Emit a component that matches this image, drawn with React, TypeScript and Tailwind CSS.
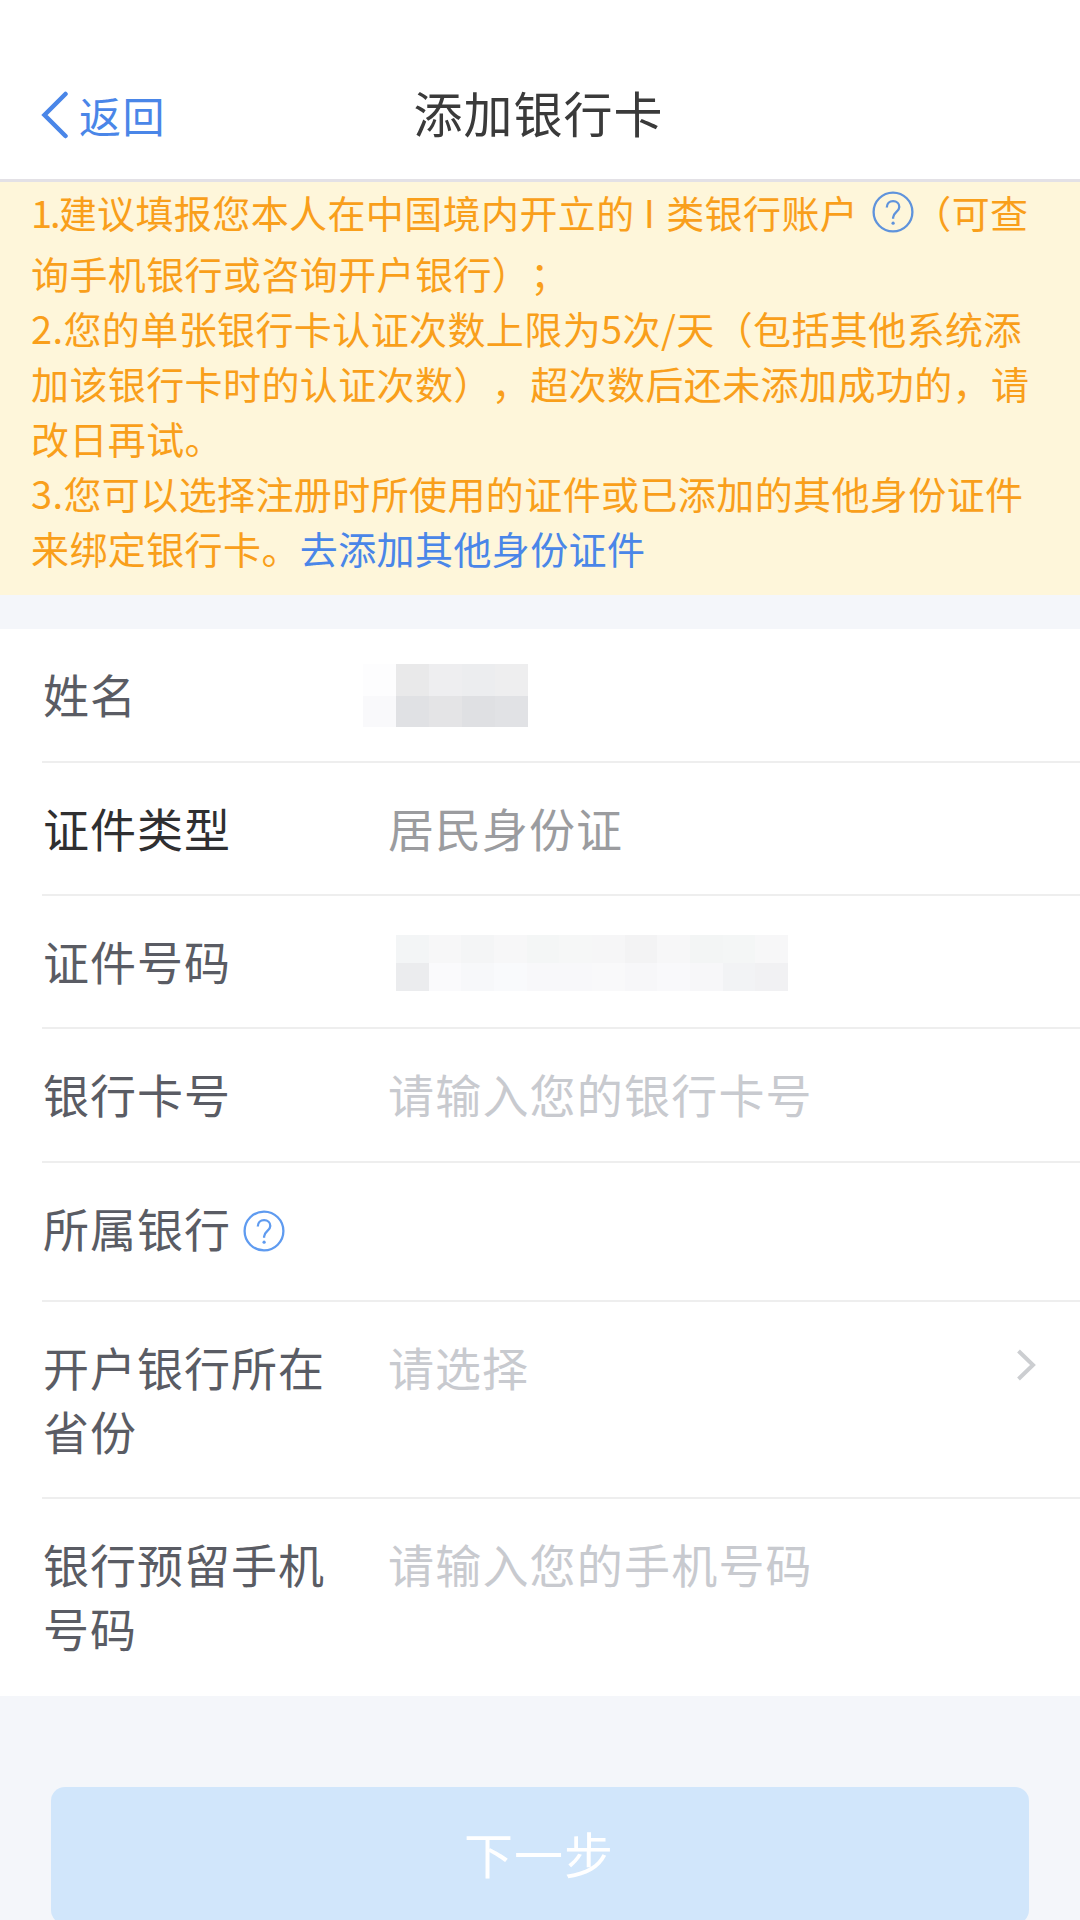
import React from 'react';

interface FormRowProps {
  label: React.ReactNode;
  className: string;
  labelColor?: string;
  children?: React.ReactNode;
}

const HelpIcon: React.FC<{ className: string }> = ({ className }) => (
  <svg width="42" height="42" viewBox="0 0 42 42" fill="none" stroke="currentColor" className={className}>
    <circle cx="21" cy="21" r="19.4" strokeWidth="2.3" />
    <path d="M14.8 16.4c0-3.8 2.7-6.3 6.3-6.3s6.2 2.4 6.2 5.8c0 5-6.2 5.6-6.2 10.6v1.3" strokeWidth="2.3" />
    <circle cx="21.1" cy="32.2" r="1.6" fill="currentColor" stroke="none" />
  </svg>
);

// Pixelated cover for private values
const Mosaic: React.FC<{ rows: string[][]; className: string }> = ({ rows, className }) => (
  <div className={`flex flex-col ${className}`}>
    {rows.map((row, i) => (
      <div key={i} className="flex flex-1">
        {row.map((color, j) => (
          <span key={j} className="flex-1" style={{ backgroundColor: color }} />
        ))}
      </div>
    ))}
  </div>
);

const nameMosaic = [
  ['#fdfdfe', '#e9e9ea', '#eeeef0', '#ecedef', '#eeeeef'],
  ['#f9f9fb', '#e0e1e4', '#e4e4e6', '#dfe0e3', '#e1e2e5'],
];

const idMosaic = [
  ['#f3f5f6', '#f7f7f8', '#f4f5f6', '#f7f7f8', '#f4f6f6', '#f6f7f7', '#f6f6f7', '#f3f3f4', '#f7f7f8', '#f3f5f5', '#f4f6f6', '#f7f7f8'],
  ['#ebecee', '#fafafc', '#f7f8fa', '#f9fafc', '#f8f8fa', '#f8f8fa', '#f9f9fa', '#f7f7f9', '#f9f9fb', '#f7f7f9', '#f2f3f5', '#f1f1f3'],
];

const FormRow: React.FC<FormRowProps> = ({ label, className, labelColor = 'text-[#5a5c64]', children }) => (
  <div className={`ml-[42px] flex items-start pt-[32px] ${className}`}>
    <div className={`w-[346px] shrink-0 pl-px ${labelColor}`}>{label}</div>
    {children}
  </div>
);

const App: React.FC = () => {
  return (
    <div className="flex h-[1920px] w-[1080px] flex-col overflow-hidden bg-[#f4f6fa] font-['Noto_Sans_CJK_SC',sans-serif] [text-spacing-trim:space-all]">
      <header className="grid h-[182px] shrink-0 grid-cols-3 items-center border-b-3 border-[#e3e1e6] bg-white pt-[45px]">
        <button className="flex items-center pt-[6px] pl-[41px] text-[#4a86e8]">
          <svg width="28" height="48" viewBox="0 0 28 48" fill="none" stroke="currentColor" strokeWidth="4.5" strokeLinecap="round">
            <path d="M24.5 3L3.5 24l21 21" />
          </svg>
          <span className="pl-[10px] text-[42px] leading-[58px] tracking-[1.5px]">返回</span>
        </button>
        <h1 className="pr-[3px] text-center text-[49px] leading-[60px] tracking-[1px] text-[#3a3a3a]">添加银行卡</h1>
      </header>

      <section className="h-[413px] shrink-0 bg-[#fef6da] pl-[31px] text-[38px] leading-[55px] tracking-[0.4px] whitespace-nowrap text-[#f99f1b]">
        <div className="mb-1 flex h-[59px] items-center">
          <span className="tracking-[-2px]">1.</span>
          <span>建议填报您本人在中国境内开立的</span>
          <span className="mr-[11px] ml-[9px]">I</span>
          <span>类银行账户</span>
          <HelpIcon className="ml-[14px] text-[#5f93dc]" />
          <span className="-ml-px">（可查</span>
        </div>
        <p>询手机银行或咨询开户银行）；</p>
        <p>2.您的单张银行卡认证次数上限为5次/天（包括其他系统添</p>
        <p>加该银行卡时的认证次数），超次数后还未添加成功的，请</p>
        <p>改日再试。</p>
        <p>3.您可以选择注册时所使用的证件或已添加的其他身份证件</p>
        <p>
          来绑定银行卡。<a className="text-[#4a86e8]">去添加其他身份证件</a>
        </p>
      </section>

      <main className="mt-[34px] shrink-0 bg-white text-[46px] leading-[64px] tracking-[1px]">
        <FormRow label="姓名" className="h-[134px] border-b-2 border-[#eee]">
          <Mosaic rows={nameMosaic} className="mt-[3px] -ml-[25px] h-[63px] w-[165px]" />
        </FormRow>
        <FormRow label="证件类型" labelColor="text-[#2f2f31]" className="h-[133px] border-b-2 border-[#eee]">
          <span className="text-[#9b9c9f]">居民身份证</span>
        </FormRow>
        <FormRow label="证件号码" className="h-[133px] border-b-2 border-[#eee]">
          <Mosaic rows={idMosaic} className="mt-[7px] ml-[8px] h-[56px] w-[392px]" />
        </FormRow>
        <FormRow label="银行卡号" className="h-[134px] border-b-2 border-[#eee]">
          <span className="tracking-[1.2px] text-[#c8cacf]">请输入您的银行卡号</span>
        </FormRow>
        <FormRow
          className="h-[139px] border-b-2 border-[#eee]"
          label={
            <div className="flex items-center">
              所属银行
              <HelpIcon className="mt-[7px] ml-[12px] text-[#5f9bf0]" />
            </div>
          }
        />
        <FormRow
          className="h-[197px] border-b-2 border-[#eee]"
          label={<>开户银行所在<br />省份</>}
        >
          <span className="flex-1 text-[#c8cacf]">请选择</span>
          <svg width="22" height="34" viewBox="0 0 22 34" fill="none" stroke="#ccced1" strokeWidth="4" className="mt-[14px] mr-[42px]">
            <path d="M2.5 3L17 17 2.5 31" />
          </svg>
        </FormRow>
        <FormRow className="h-[197px]" label={<>银行预留手机<br />号码</>}>
          <span className="tracking-[1.2px] text-[#c8cacf]">请输入您的手机号码</span>
        </FormRow>
      </main>

      <button className="mx-[51px] mt-[91px] h-[137px] shrink-0 rounded-[14px] bg-[#d1e6fb] pr-[2px] pb-[6px] text-[49px] tracking-[1px] text-white">
        下一步
      </button>
    </div>
  );
};

export default App;
